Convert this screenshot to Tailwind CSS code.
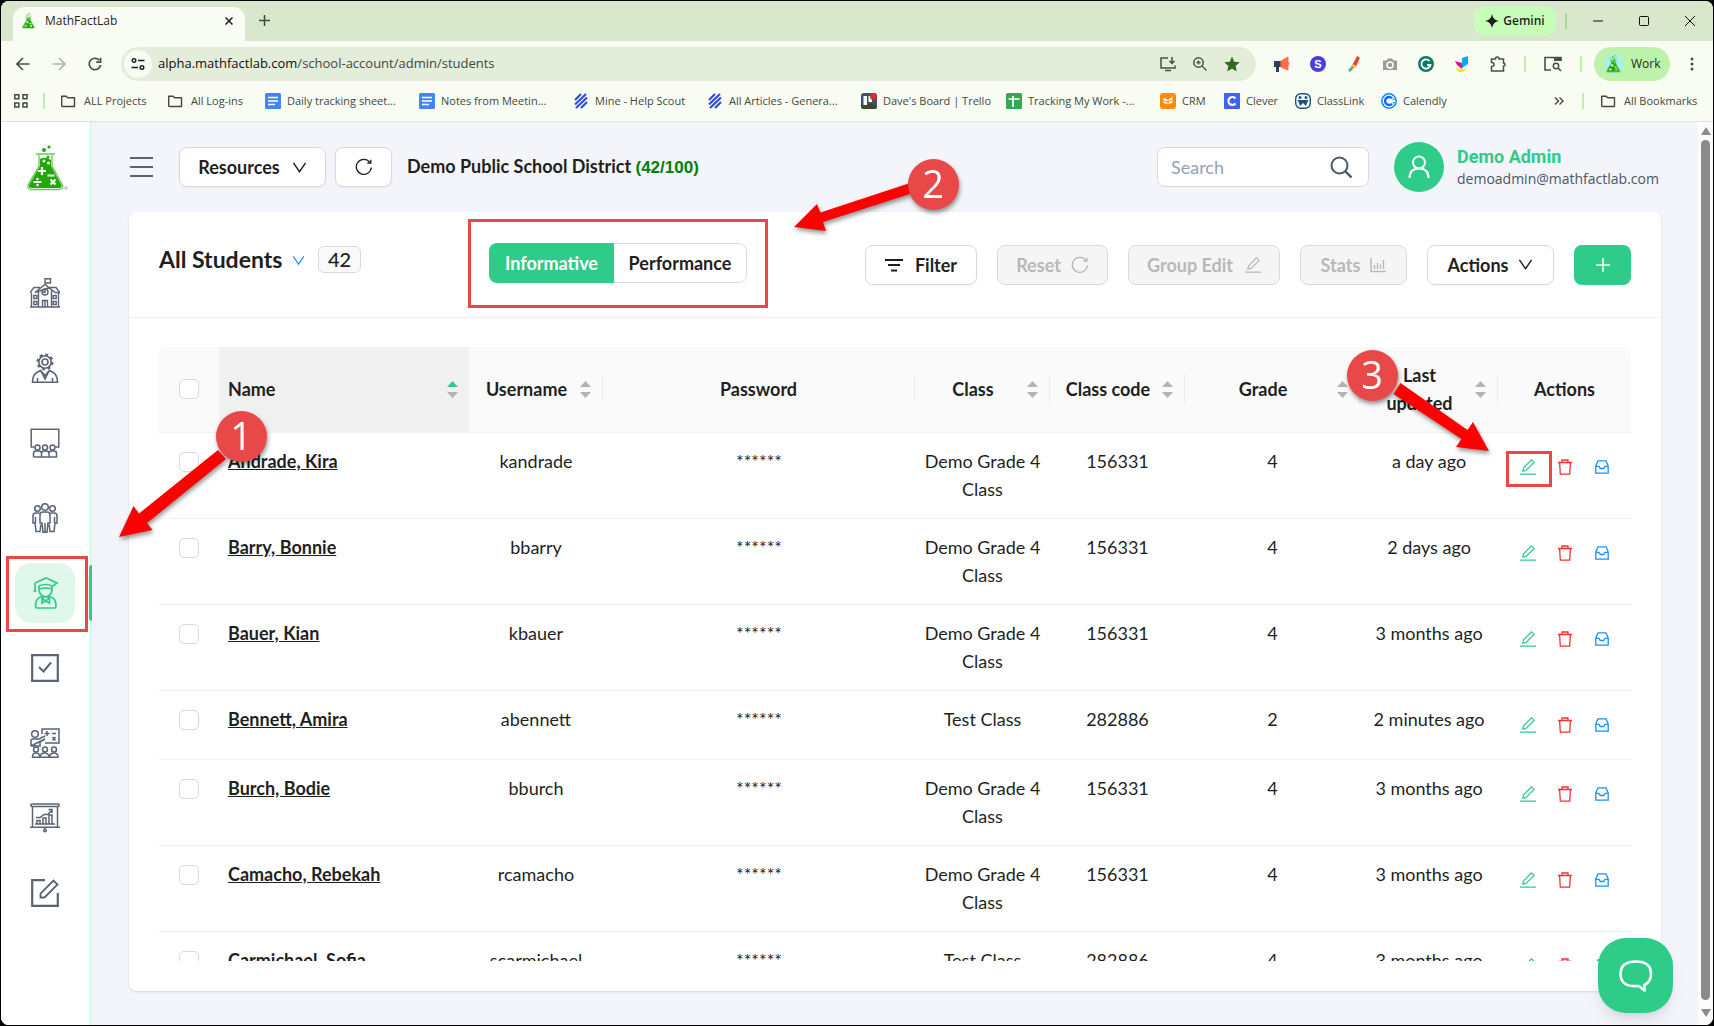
<!DOCTYPE html>
<html lang="en">

<head>
  <meta charset="UTF-8" />
  <title>MathFactLab</title>
  <script src="https://cdn.jsdelivr.net/npm/@tailwindcss/browser@4"></script>
</head>

<body class="h-screen overflow-hidden bg-black p-px font-['Lato',sans-serif] text-[#1f1f1f]">

  <!-- shared icons -->
  <svg class="hidden">
    <symbol id="flask" viewBox="0 0 42 46">
      <circle cx="18" cy="5" r="2" fill="#23a80b" />
      <circle cx="23" cy="2" r="1.600" fill="#23a80b" />
      <path d="M10 9h19M13 10v11L2 40q-1 4 3 4.500h28q5-.5 3.500-4.500L26 21V10" fill="none" stroke="#6cc65c" stroke-width="1.300" />
      <path d="M14 14q5-3 11 1v6l10.500 19q1 3-2.500 3H5.500Q2 43 3 40l11-19z" fill="#23a80b" />
      <circle cx="18" cy="16" r="1.500" fill="#fff" /><circle cx="22" cy="12" r="1.500" fill="#23a80b" />
      <circle cx="22.500" cy="18" r="1.500" fill="#fff" />
      <path d="M16 22v8M12 26h8M21.500 30.500h7M7.500 37h8M24.500 34.500l5 5M29.500 34.500l-5 5" stroke="#fff" stroke-width="2.200" />
      <circle cx="11.500" cy="34" r="1.200" fill="#fff" /><circle cx="11.500" cy="40" r="1.200" fill="#fff" />
      <circle cx="40" cy="43" r="1.300" fill="none" stroke="#6cc65c" stroke-width=".7" />
    </symbol>
    <symbol id="chevron" viewBox="0 0 16 16">
      <path d="M1.500 3L8 12.500 14.500 3" fill="none" stroke="currentColor" stroke-width="1.500" />
    </symbol>
    <symbol id="reload" viewBox="0 0 18 18">
      <path d="M16.300 9.500A7.500 7.500 0 1 1 15 4.600M15.800 1.800v3.400h-3.600" fill="none" stroke="currentColor" stroke-width="1.300" />
    </symbol>
    <symbol id="pencil" viewBox="0 0 16 16">
      <path d="M2.800 12.200l.8-3.400 7.900-8 2.600 2.600-8 8zM0 15.200h16" fill="none" stroke="currentColor" stroke-width="1.200" />
    </symbol>
    <symbol id="trash" viewBox="0 0 16 16">
      <path d="M1 3.500h14M5 3.500V1h6v2.500M2.600 3.500l.7 11.700h9.400l.7-11.700" fill="none" stroke="currentColor" stroke-width="1.300" />
    </symbol>
    <symbol id="inbox" viewBox="-1 -1 16 16">
      <path d="M.8 13.200V6L3 .8h8L13.200 6v7.200zM.8 6.300H4l1.300 2.200h3.400L10 6.300h3.200" fill="none" stroke="currentColor" stroke-width="1.300" />
    </symbol>
    <symbol id="folder" viewBox="0 0 16 16">
      <path d="M1.700 12.500V3.200h4.500l1.500 1.600h6.800v8.700H2.400q-.7 0-.7-1z" fill="none" stroke="currentColor" stroke-width="1.400" stroke-linejoin="round" />
    </symbol>
    <symbol id="doc" viewBox="0 0 16 16">
      <rect width="16" height="16" rx="1.500" fill="#4285f4" />
      <path d="M3 4.500h10M3 8h10M3 11.500h7" stroke="#fff" stroke-width="1.400" />
    </symbol>
    <symbol id="helpscout" viewBox="0 0 14 16">
      <path d="M1 7l6-6M1 11.500L12 1M2 15L13 4.500M7 15l6-6" stroke="#304ddb" stroke-width="2.200" />
    </symbol>
  </svg>

  <div class="flex h-full flex-col overflow-hidden rounded-lg bg-[#f9fcf2]">

    <!-- tab strip -->
    <div class="flex h-10 shrink-0 items-start bg-[#d9e8cd] pl-3 pt-[6px] font-['Open_Sans',sans-serif] text-xs">
      <div class="flex h-[34px] w-[232px] items-center rounded-t-xl bg-[#f9fcf2] pb-[6px] pl-2 pr-2">
        <svg class="mr-2 size-4"><use href="#flask" /></svg>
        <span class="grow">MathFactLab</span>
        <button class="p-1" aria-label="Close tab"><svg class="size-2" viewBox="0 0 8 8"><path d="M.5.5l7 7M7.500.5l-7 7" stroke="#1f1f1f" stroke-width="1.500" /></svg></button>
      </div>
      <button class="ml-[14px] mt-2" aria-label="New tab"><svg class="size-[11px]" viewBox="0 0 11 11"><path d="M5.500 0v11M0 5.500h11" stroke="#3c4a3a" stroke-width="1.500" /></svg></button>
      <div class="grow"></div>
      <button class="flex h-7 w-[82px] items-center justify-center gap-1 rounded-[10px] bg-[#c8ffb8] font-semibold">
        <svg class="size-[14px]" viewBox="0 0 14 14"><path d="M7 0q1 6 7 7-6 1-7 7-1-6-7-7 6-1 7-7z" fill="#1f1f1f" /></svg>Gemini
      </button>
      <div class="ml-[9px] mt-[6px] h-4 w-[2px] bg-[#a9d69a]"></div>
      <div class="flex items-center pl-2">
        <button class="grid h-7 w-[46px] place-items-center" aria-label="Minimize"><svg class="size-[10px]" viewBox="0 0 10 10"><path d="M0 5h10" stroke="#111" /></svg></button>
        <button class="grid h-7 w-[46px] place-items-center" aria-label="Maximize"><svg class="size-[10px]" viewBox="0 0 10 10"><rect x=".5" y=".5" width="9" height="9" rx="1" fill="none" stroke="#111" /></svg></button>
        <button class="grid h-7 w-[46px] place-items-center" aria-label="Close"><svg class="size-[10px]" viewBox="0 0 10 10"><path d="M0 0l10 10M10 0L0 10" stroke="#111" /></svg></button>
      </div>
    </div>

    <!-- toolbar -->
    <div class="flex h-[46px] shrink-0 items-center pl-[15px] pr-[19px] text-[#43533f]">
      <button class="mr-[22px]" aria-label="Back"><svg class="size-[14px]" viewBox="0 0 14 14"><path d="M13.500 7H1.500M7 1L1 7l6 6" fill="none" stroke="currentColor" stroke-width="1.600" /></svg></button>
      <button class="mr-[22px] text-[#adb5a9]" aria-label="Forward"><svg class="size-[14px]" viewBox="0 0 14 14"><path d="M.5 7h12M7 1l6 6-6 6" fill="none" stroke="currentColor" stroke-width="1.600" /></svg></button>
      <button class="mr-[19px]" aria-label="Reload"><svg class="size-[14px]" viewBox="0 0 14 14"><path d="M12.600 8A5.700 5.700 0 1 1 11.300 3.200M12.600.8v4.400H8.200" fill="none" stroke="currentColor" stroke-width="1.700" /></svg></button>
      <div class="flex h-[34px] grow items-center rounded-full bg-[#e4ecda] pl-[3px] pr-4">
        <span class="grid size-7 place-items-center rounded-full bg-[#f9fcf2]"><svg class="size-[14px]" viewBox="0 0 14 14"><path d="M7 3.500h6.500M.5 10.500H7" stroke="#1f1f1f" stroke-width="1.500" /><circle cx="3" cy="3.500" r="1.800" fill="none" stroke="#1f1f1f" stroke-width="1.400" /><circle cx="11" cy="10.500" r="1.800" fill="none" stroke="#1f1f1f" stroke-width="1.400" /></svg></span>
        <span class="grow pl-[6px] font-['Open_Sans',sans-serif] text-[13px] text-[#43483f]"><span class="text-[#111]">alpha.mathfactlab.com</span>/school-account/admin/students</span>
        <span class="flex items-center gap-4">
          <svg class="size-4" viewBox="0 0 16 16"><path d="M8 2H1v10h14V9.500M5 14.500h6M12 1v6.500M9.500 5L12 7.500 14.500 5" fill="none" stroke="currentColor" stroke-width="1.500" /></svg>
          <svg class="size-4" viewBox="0 0 16 16"><circle cx="6.500" cy="6.500" r="4.700" fill="none" stroke="currentColor" stroke-width="1.500" /><path d="M10 10l4.500 4.500M4.500 6.500h4M6.500 4.500v4" stroke="currentColor" stroke-width="1.400" /></svg>
          <svg class="size-4" viewBox="0 0 16 16"><path d="M8 .5l2.200 5.200 5.600.5-4.200 3.700 1.200 5.500L8 12.500l-4.800 2.900 1.200-5.500L.2 6.200l5.600-.5z" fill="#33691e" /></svg>
        </span>
      </div>
      <div class="ml-[18px] flex items-center gap-5">
        <svg class="size-4" viewBox="0 0 16 16"><path d="M0 5h9v6H5v5H2v-5H0z" fill="#2b3f5c" /><path d="M7 5l7-4v13l-7-3zM15 6v3" fill="#ff6f47" stroke="#ff6f47" /></svg>
        <svg class="size-4" viewBox="0 0 16 16"><circle cx="8" cy="8" r="8" fill="#4a3ee0" /><text x="8" y="12" text-anchor="middle" font-family="Liberation Sans" font-weight="bold" font-size="11" fill="#fff">S</text></svg>
        <svg class="size-4" viewBox="0 0 16 16"><path d="M7 9l4.500-8L13 2 9.500 10z" fill="#e8432e" stroke="#e8432e" stroke-width="1.500" /><path d="M6 9l3 2" stroke="#f5c043" stroke-width="3" /><path d="M3 15l4-4" stroke="#53a891" stroke-width="2.500" /></svg>
        <svg class="size-4" viewBox="0 0 16 16"><path d="M1 4.500h3.500L6 2.500h4l1.500 2H15V14H1z" fill="#9b9b9b" /><circle cx="8" cy="9" r="3" fill="none" stroke="#fff" stroke-width="1.500" /></svg>
        <svg class="size-4" viewBox="0 0 16 16"><circle cx="8" cy="8" r="8" fill="#0b7a66" /><path d="M11.500 5A4.600 4.600 0 1 0 12.500 9H9" fill="none" stroke="#fff" stroke-width="1.800" /></svg>
        <svg class="size-4" viewBox="0 0 16 16"><path d="M8 2l6-2v8l-6 4z" fill="#00aeef" /><path d="M1 5l7 2v6l-5-4z" fill="#ec0a8c" /><path d="M1 11l6 3 6-2-4 4H5z" fill="#ffe600" /></svg>
        <svg class="size-4" viewBox="0 0 16 16"><path d="M1.500 3h4q0-2 1.800-2T9 3h4.500v4q1.500 0 1.500 1.500T13.500 10v5h-12v-4.500q2.500 0 2.500-2t-2.500-2z" fill="none" stroke="currentColor" stroke-width="1.500" /></svg>
      </div>
      <div class="ml-[18px] h-4 w-[2px] bg-[#bdf0ab]"></div>
      <svg class="ml-[18px] h-4 w-[18px]" viewBox="0 0 18 16"><path d="M7 14H1V1.500h16V5" fill="none" stroke="currentColor" stroke-width="1.600" /><path d="M10 1h7v4h-7z" fill="currentColor" /><circle cx="12" cy="10" r="2.700" fill="none" stroke="currentColor" stroke-width="1.500" /><path d="M14 12l3 3" stroke="currentColor" stroke-width="1.600" /></svg>
      <div class="ml-[18px] h-4 w-[2px] bg-[#bdf0ab]"></div>
      <button class="ml-3 flex h-[34px] w-[76px] items-center gap-[7px] rounded-full bg-[#bdf2ab] pl-[10px] font-['Open_Sans',sans-serif] text-xs text-[#14330c]">
        <span class="grid size-5 place-items-center rounded-full bg-[#a8f0e8]"><svg class="size-[18px]"><use href="#flask" /></svg></span>Work
      </button>
      <button class="ml-5" aria-label="Menu"><svg class="h-[14px] w-1" viewBox="0 0 4 14"><circle cx="2" cy="2" r="1.500" fill="currentColor" /><circle cx="2" cy="7" r="1.500" fill="currentColor" /><circle cx="2" cy="12" r="1.500" fill="currentColor" /></svg></button>
    </div>

    <!-- bookmarks -->
    <nav class="flex h-[35px] shrink-0 items-center border-b border-[#dfe5d6] pl-[13px] pr-[12px] pb-[6px] font-['Open_Sans',sans-serif] text-[11px] whitespace-nowrap text-[#43483f]">
      <svg class="size-[14px]" viewBox="0 0 14 14"><path d="M.8.8h4v4h-4zM9 .8h4v4H9zM.8 9h4v4h-4zM9 9h4v4H9z" fill="none" stroke="currentColor" stroke-width="1.500" /></svg>
      <div class="ml-[15px] h-4 w-[2px] bg-[#bdf0ab]"></div>
      <a href="#" class="ml-[15px] flex w-[107px] items-center gap-2"><svg class="size-4"><use href="#folder" /></svg>ALL Projects</a>
      <a href="#" class="flex w-[98px] items-center gap-2"><svg class="size-4"><use href="#folder" /></svg>All Log-ins</a>
      <a href="#" class="flex w-[154px] items-center gap-[6px]"><svg class="size-4"><use href="#doc" /></svg>Daily tracking sheet...</a>
      <a href="#" class="flex w-[155px] items-center gap-[6px]"><svg class="size-4"><use href="#doc" /></svg>Notes from Meetin...</a>
      <a href="#" class="flex w-[134px] items-center gap-[7px]"><svg class="h-4 w-[14px]"><use href="#helpscout" /></svg>Mine - Help Scout</a>
      <a href="#" class="flex w-[153px] items-center gap-[7px]"><svg class="h-4 w-[14px]"><use href="#helpscout" /></svg>All Articles - Genera...</a>
      <a href="#" class="flex w-[145px] items-center gap-[6px]"><svg class="size-4" viewBox="0 0 16 16"><rect width="16" height="16" rx="3" fill="#3b5468" /><path d="M0 12q8-3 16 1v1q0 2-2 2H3q-3 0-3-3z" fill="#3d4a30" /><rect x="2.500" y="3" width="3.500" height="9" fill="#fff" /><rect x="7.500" y="3" width="3.500" height="6" fill="#fff" /><circle cx="12.500" cy="3.500" r="3.500" fill="#d3302b" /></svg>Dave's Board | Trello</a>
      <a href="#" class="flex w-[154px] items-center gap-[6px]"><svg class="size-4" viewBox="0 0 16 16"><rect width="16" height="16" rx="1.500" fill="#34a853" /><path d="M7 3v11M2.500 6h11" stroke="#fff" stroke-width="1.700" /></svg>Tracking My Work -...</a>
      <a href="#" class="flex w-16 items-center gap-[6px]"><svg class="size-4" viewBox="0 0 16 16"><rect width="16" height="16" rx="3" fill="#fb8c00" /><path d="M3.500 5l4 1.300v5l-4-1.500zM12.500 4l-4 2.300v5l4-1.500z" fill="#fff" /><path d="M3.500 8l4 1 5-2" stroke="#fb8c00" fill="none" /></svg>CRM</a>
      <a href="#" class="flex w-[71px] items-center gap-[6px]"><svg class="size-4" viewBox="0 0 16 16"><rect width="16" height="16" rx="1" fill="#4160f5" /><path d="M11.500 5.500A4 4 0 1 0 11.500 10.500" fill="none" stroke="#fff" stroke-width="2.200" /></svg>Clever</a>
      <a href="#" class="flex w-[86px] items-center gap-[6px]"><svg class="size-4" viewBox="0 0 16 16"><rect x=".7" y=".7" width="14.600" height="14.600" rx="5" fill="#fff" stroke="#1c5279" stroke-width="1.400" /><circle cx="5" cy="4.500" r="1.500" fill="#1c5279" /><circle cx="11" cy="4.500" r="1.500" fill="#1c5279" /><path d="M2.500 7h11L12 10l-1 3-3-3-3 3-1-3z" fill="#1c5279" /></svg>ClassLink</a>
      <a href="#" class="flex items-center gap-[6px]"><svg class="size-4" viewBox="0 0 16 16"><circle cx="8" cy="8" r="7.200" fill="none" stroke="#0a84ff" stroke-width="1.500" /><path d="M11 5.300A4 4 0 1 0 11 10.700" fill="none" stroke="#006bff" stroke-width="2.400" /><path d="M11.500 6.300h3.500M11.500 9.700h3.500" stroke="#25b7f0" stroke-width="1.400" /></svg>Calendly</a>
      <div class="grow"></div>
      <svg class="h-2 w-[10px]" viewBox="0 0 10 8"><path d="M1 .5L4.500 4 1 7.500M5.500.5L9 4 5.500 7.500" fill="none" stroke="currentColor" stroke-width="1.400" /></svg>
      <div class="ml-[18px] h-4 w-[2px] bg-[#bdf0ab]"></div>
      <a href="#" class="ml-4 flex w-[101px] items-center gap-2"><svg class="size-4"><use href="#folder" /></svg>All Bookmarks</a>
    </nav>

    <div class="flex min-h-0 grow bg-[#f4f5fa]">

      <!-- sidebar -->
      <aside class="flex w-[90px] shrink-0 flex-col items-center border-r border-[#cdf3e2] bg-white pt-[23px] pr-[2px] text-[#5a6474]">
        <svg class="ml-[5px] h-[46px] w-[42px]"><use href="#flask" /></svg>
        <nav class="mt-[72px] flex flex-col gap-[15px]">
          <a href="#" class="grid size-[60px] place-items-center" aria-label="School">
            <svg class="size-[30px]" viewBox="0 0 30 30" fill="none" stroke="currentColor" stroke-width="1.400"><path d="M0 29h30M1.500 29V14.500M28.500 29V14.500M0 14.500L4 9.500h6M20 9.500h6l4 5h-5L15 6.500 5 14.500zM15 7V.8h5.500V5H15M8.500 12.500V29M21.500 12.500V29M12.500 29v-6.500h5V29M15 22.500V29M3.800 17.500h3v3h-3zM3.800 23.500h3v3h-3zM23.200 17.500h3v3h-3zM23.200 23.500h3v3h-3z" /><circle cx="15" cy="14" r="3" /><path d="M15 12v2.200h-2" /></svg>
          </a>
          <a href="#" class="grid size-[60px] place-items-center" aria-label="Administrators">
            <svg class="size-[30px]" viewBox="0 0 30 30" fill="none" stroke="currentColor" stroke-width="1.600"><path d="M2.500 29.200q0-7.700 5-10.200l3-1.500 4.500 5 4.500-5 3 1.500q5 2.500 5 10.200zM7.500 29v-4M22.500 29v-4M11 18l4 8 4-8" /><circle cx="15" cy="9" r="6.200" /><circle cx="15" cy="9" r="3" /><circle cx="15" cy="9" r="7.500" stroke-width="2" stroke-dasharray="2.900 3" /></svg>
          </a>
          <a href="#" class="grid size-[60px] place-items-center" aria-label="Classes">
            <svg class="size-[30px]" viewBox="0 0 30 30" fill="none" stroke="currentColor" stroke-width="1.500"><path d="M4.500 19H1.200V1.200h27.600V19h-3.300" /><circle cx="7.500" cy="19.500" r="2.500" /><circle cx="15" cy="19.500" r="2.500" /><circle cx="22.500" cy="19.500" r="2.500" /><path d="M3.500 29v-3.500q0-2.500 2.500-2.500h3q2.500 0 2.500 2.500V29M11.500 29v-3.500q0-2.500 2.500-2.500h2.500q2.500 0 2.500 2.500V29M19 25.500q0-2.500 2.500-2.500h2.500q2.500 0 2.500 2.500V29h-23" /></svg>
          </a>
          <a href="#" class="grid size-[60px] place-items-center" aria-label="Groups">
            <svg class="size-[30px]" viewBox="0 0 30 30" fill="none" stroke="currentColor" stroke-width="1.500"><circle cx="15" cy="4" r="3.300" /><circle cx="7.500" cy="5.500" r="2.800" /><circle cx="22.500" cy="5.500" r="2.800" /><path d="M10 20V12q0-3 3-3h4q3 0 3 3v8h-2l-1 9.300h-4L12 20zM15 20v9M9.500 10H6q-3 0-3 3v7h2l1 8.500h4l.8-7M20.500 10H24q3 0 3 3v7h-2l-1 8.500h-4l-.8-7M5.500 14v6M24.500 14v6" /></svg>
          </a>
          <a href="#" class="grid size-[60px] place-items-center rounded-2xl bg-[#e0f7ec] text-[#2ecb89]" aria-label="Students">
            <svg class="h-8 w-[30px]" viewBox="0 0 30 32" fill="none" stroke="currentColor" stroke-width="1.700"><path d="M5 6l11-5 11 5-5 3.500M5 6v8M3.500 14h3M9 9q7-3 13 0v3q0 5-4 7-2.500 1.500-5 0-4-2-4-7zM9 12q7-2 13 0M7 31q-1.500 0-1.500-1.500 0-8 5-9.500h10.500q5 1.500 5 9.500 0 1.500-1.500 1.500zM12 21l3.500 3 4-3v5l-4-2-3.500 2z" /></svg>
          </a>
          <a href="#" class="grid size-[60px] place-items-center" aria-label="Assignments">
            <svg class="size-7" viewBox="0 0 28 28" fill="none" stroke="currentColor" stroke-width="2.200"><path d="M1.200 1.200h25.600v25.600H1.200z" /><path d="M8 13l4.500 4.500L20 8.500" stroke-width="2" /></svg>
          </a>
          <a href="#" class="grid size-[60px] place-items-center" aria-label="Teaching">
            <svg class="size-[30px]" viewBox="0 0 30 30" fill="none" stroke="currentColor" stroke-width="1.500"><circle cx="5" cy="6" r="3.300" /><path d="M1 18v-5q0-2 2-2h6l6-3M15 11l-5 3v4H1zM12 6V1h17v14H15M17 3v5M14.500 5.500h5M22 5.500h4M22.500 9l3 3.500M25.500 9l-3 3.500" /><circle cx="6" cy="21.500" r="2.500" /><circle cx="15" cy="21.500" r="2.500" /><circle cx="24" cy="21.500" r="2.500" /><path d="M2.500 29.200q0-4.200 3.500-4.200t4 4.200q.5-4.200 4.500-4.200t5 4.200q.5-4.200 4.500-4.200t4 4.200z" /></svg>
          </a>
          <a href="#" class="grid size-[60px] place-items-center" aria-label="Reports">
            <svg class="size-[30px]" viewBox="0 0 30 30" fill="none" stroke="currentColor" stroke-width="1.500"><rect x=".8" y="1" width="28.400" height="2.400" rx="1.200" /><path d="M2.500 3.500V24M27.500 3.500V24M0 24.200h30M15 24v3M5 21h20M7 21v-3.500h3V21M13 21v-6h3v6M19 21v-9h3v9M6 14.500h4l4-3h4L22 7M18.500 6.500H22V10" /><circle cx="15" cy="27.500" r="1.300" /></svg>
          </a>
          <a href="#" class="grid size-[60px] place-items-center" aria-label="Edit">
            <svg class="size-7" viewBox="0 0 28 28" fill="none" stroke="currentColor" stroke-width="2.200"><path d="M14 1.200H1.200v25.600h25.600V14" /><path d="M9.500 18.500v-4L22.500 1.500l4 4-13 13z" stroke-width="1.800" /></svg>
          </a>
        </nav>
      </aside>

      <main class="flex min-w-0 grow flex-col pb-[34px] pl-[38px] pr-[37px]">

        <!-- page header -->
        <header class="flex h-[90px] shrink-0 items-center pl-px text-lg font-bold">
          <button class="mr-[26px]" aria-label="Toggle menu"><svg class="h-[22px] w-[23px]" viewBox="0 0 23 22"><path d="M0 2h23M0 11h23M0 20h23" stroke="#5a6474" stroke-width="2" /></svg></button>
          <button class="mr-[9px] flex h-10 w-[147px] items-center justify-center gap-3 rounded-lg border border-[#d9d9d9] bg-white shadow-xs">Resources <svg class="size-[15px]"><use href="#chevron" /></svg></button>
          <button class="mr-[15px] grid h-10 w-[57px] place-items-center rounded-lg border border-[#d9d9d9] bg-white shadow-xs" aria-label="Refresh"><svg class="size-[18px]"><use href="#reload" /></svg></button>
          <p class="grow">Demo Public School District <span class="font-['Liberation_Sans',sans-serif] text-[17px] text-[#008000]">(42/100)</span></p>
          <label class="flex h-10 w-[212px] items-center rounded-lg border border-[#d9d9d9] bg-white pl-[13px] pr-4">
            <input type="text" placeholder="Search" aria-label="Search" class="w-0 grow font-normal outline-none placeholder:text-[#94a1b8]" />
            <svg class="size-[22px]" viewBox="0 0 22 22"><circle cx="9.500" cy="9.500" r="8" fill="none" stroke="#4b5563" stroke-width="2" /><path d="M15 15l6.500 6.500" stroke="#4b5563" stroke-width="2.400" /></svg>
          </label>
          <div class="ml-[25px] flex items-center">
            <span class="mr-[13px] grid size-[50px] place-items-center rounded-full bg-[#2ecb89]"><svg class="h-6 w-[22px]" viewBox="0 0 22 24"><circle cx="11" cy="7.500" r="6" fill="none" stroke="#fff" stroke-width="2" /><path d="M1.500 23q0-9.500 9.500-9.500t9.500 9.500" fill="none" stroke="#fff" stroke-width="2" /></svg></span>
            <div class="w-[204px] leading-6"><p class="font-['Roboto',sans-serif] text-[#2ecb89]">Demo Admin</p><p class="font-['Open_Sans',sans-serif] text-[14px] leading-5 font-normal text-[#4b5563]">demoadmin@mathfactlab.com</p></div>
          </div>
        </header>

        <!-- students card -->
        <section class="flex min-h-0 grow flex-col rounded-lg bg-white shadow-sm">
          <div class="flex h-[106px] shrink-0 items-center border-b border-[#f0f0f0] px-[30px] text-lg font-bold">
            <h1 class="mb-3 w-[133px] text-[23px] leading-8 whitespace-nowrap">All Students</h1>
            <svg class="mb-2 size-[13px] text-[#1890ff]"><use href="#chevron" /></svg>
            <span class="mb-[11px] ml-[13px] grid h-[27px] w-[43px] place-items-center rounded-md border border-[#d9d9d9] bg-[#fafafa] text-xl leading-6 font-medium">42</span>
            <div class="ml-[128px] mb-1 flex h-10 w-[258px] shrink-0 overflow-hidden rounded-lg">
              <button class="w-[125px] bg-[#2ecb89] text-white">Informative</button>
              <button class="grow rounded-r-lg border border-l-0 border-[#d9d9d9] bg-white">Performance</button>
            </div>
            <div class="flex grow justify-end gap-5">
              <button class="flex h-10 w-[112px] items-center justify-center gap-3 rounded-lg border border-[#d9d9d9] shadow-xs"><svg class="h-[14px] w-[18px]" viewBox="0 0 18 14"><path d="M0 2h18M3 7h12M6 12.500h6" stroke="#1f1f1f" stroke-width="1.800" /></svg>Filter</button>
              <button disabled class="flex h-10 w-[111px] items-center justify-center gap-[10px] rounded-lg border border-[#d9d9d9] bg-[#f5f5f5] text-[#b8b8b8]">Reset<svg class="size-[18px]"><use href="#reload" /></svg></button>
              <button disabled class="flex h-10 w-[152px] items-center justify-center gap-3 rounded-lg border border-[#d9d9d9] bg-[#f5f5f5] text-[#b8b8b8]">Group Edit<svg class="size-4"><use href="#pencil" /></svg></button>
              <button disabled class="flex h-10 w-[107px] items-center justify-center gap-[10px] rounded-lg border border-[#d9d9d9] bg-[#f5f5f5] text-[#b8b8b8]">Stats<svg class="size-4" viewBox="0 0 16 16"><path d="M1 1v13.500h15M4.500 12V8M7.500 12V6M10.500 12V7.500M13.500 12V3" fill="none" stroke="currentColor" stroke-width="1.400" /></svg></button>
              <button class="flex h-10 w-[127px] items-center justify-center gap-[10px] rounded-lg border border-[#d9d9d9] shadow-xs">Actions<svg class="size-[15px]"><use href="#chevron" /></svg></button>
              <button class="grid h-10 w-[57px] place-items-center rounded-lg bg-[#2ecb89]" aria-label="Add student"><svg class="size-[14px]" viewBox="0 0 14 14"><path d="M7 0v14M0 7h14" stroke="#fff" stroke-width="1.400" /></svg></button>
            </div>
          </div>

          <div class="mx-[30px] mt-[29px] mb-[30px] min-h-0 grow overflow-hidden">
            <table class="w-full table-fixed text-center text-lg leading-7">
              <colgroup>
                <col class="w-[60px]" /><col class="w-[250px]" /><col class="w-[134px]" /><col /><col class="w-[135px]" />
                <col class="w-[135px]" /><col class="w-[175px]" /><col class="w-[138px]" /><col class="w-[133px]" />
              </colgroup>
              <thead>
                <tr id="headRow" class="h-[85px] border-b border-[#f0f0f0]"></tr>
              </thead>
              <tbody id="studentRows"></tbody>
            </table>
          </div>
        </section>
      </main>

      <!-- page scrollbar -->
      <div class="flex w-[15px] shrink-0 flex-col items-center bg-[#fcfcfc] pt-[5px] pb-2">
        <svg class="h-2 w-[10px]" viewBox="0 0 10 8"><path d="M5 0l5 8H0z" fill="#8b8b8b" /></svg>
        <div class="mt-[5px] mb-[9px] w-[9px] grow rounded-full bg-[#8b8b8b]"></div>
        <svg class="h-2 w-[10px]" viewBox="0 0 10 8"><path d="M5 8l5-8H0z" fill="#8b8b8b" /></svg>
      </div>
    </div>
  </div>

  <!-- marker on the active menu item -->
  <div class="absolute top-[565px] left-[89px] h-[56px] w-[3px] rounded-l-lg bg-[#2ecb89]"></div>

  <!-- chat launcher -->
  <button class="absolute right-[41px] bottom-[13px] grid size-[75px] place-items-center rounded-[28px] bg-[#2ecb89] shadow-lg" aria-label="Chat">
    <svg class="h-8 w-[34px]" viewBox="0 0 34 32"><path d="M17 1.500q15 0 15 12.500 0 8-6.500 11v5.500L20 26q-18.500 1.500-18.500-12Q1.500 1.500 17 1.500z" fill="none" stroke="#fff" stroke-width="2.600" stroke-linejoin="round" /></svg>
  </button>

  <!-- numbered callouts -->
  <svg class="pointer-events-none absolute top-0 left-0 h-[1026px] w-[1714px] drop-shadow-[1px_3px_2px_rgba(0,0,0,0.4)]" viewBox="0 0 1714 1026">
    <g fill="#ff0000">
      <path d="M119 537l14.500-31 5.500 7.500L218 450l8 9-79 64 5.500 7z" />
      <path d="M794 227l23-23 3.500 8.500L910 183l3 10-90 29 3 9z" />
      <path d="M1489 451l-33-4 5.500-8-68-45 7-11 67 47 5.500-8z" />
    </g>
    <g fill="#e84848">
      <circle cx="241.500" cy="436.500" r="25.500" />
      <circle cx="933.500" cy="184.500" r="25.500" />
      <circle cx="1372.500" cy="375.500" r="25.500" />
    </g>
    <g fill="#fff" font-family="Open Sans" font-size="38" text-anchor="middle">
      <text x="241" y="450">1</text>
      <text x="933" y="198">2</text>
      <text x="1372" y="389">3</text>
    </g>
  </svg>
  <div class="absolute top-[556px] left-[6px] h-[76px] w-[82px] border-3 border-[#e84848]"></div>
  <div class="absolute top-[219px] left-[468px] h-[89px] w-[300px] border-3 border-[#e84848]"></div>
  <div class="absolute top-[451px] left-[1506px] h-[36px] w-[46px] border-3 border-[#e84848]"></div>

  <script>
    const columns = [
      { title: "Name", sort: "asc" },
      { title: "Username", sort: "none", divider: true },
      { title: "Password", divider: true },
      { title: "Class", sort: "none", divider: true },
      { title: "Class code", sort: "none", divider: true },
      { title: "Grade", sort: "none", divider: true },
      { title: "Last<br />updated", sort: "none", divider: true },
      { title: "Actions" },
    ];

    const students = [
      { name: "Andrade, Kira", user: "kandrade", cls: "Demo Grade 4 Class", code: "156331", grade: 4, updated: "a day ago" },
      { name: "Barry, Bonnie", user: "bbarry", cls: "Demo Grade 4 Class", code: "156331", grade: 4, updated: "2 days ago" },
      { name: "Bauer, Kian", user: "kbauer", cls: "Demo Grade 4 Class", code: "156331", grade: 4, updated: "3 months ago" },
      { name: "Bennett, Amira", user: "abennett", cls: "Test Class", code: "282886", grade: 2, updated: "2 minutes ago" },
      { name: "Burch, Bodie", user: "bburch", cls: "Demo Grade 4 Class", code: "156331", grade: 4, updated: "3 months ago" },
      { name: "Camacho, Rebekah", user: "rcamacho", cls: "Demo Grade 4 Class", code: "156331", grade: 4, updated: "3 months ago" },
      { name: "Carmichael, Sofia", user: "scarmichael", cls: "Test Class", code: "282886", grade: 4, updated: "3 months ago" },
    ];

    const checkbox = (label) => `<input type="checkbox" aria-label="${label}" class="block size-5 appearance-none rounded-[5px] border border-[#d9d9d9] bg-white" />`;

    // Sort arrows, the upper one is green when the column is sorted
    const sorter = (sort) => `
      <svg class="ml-[5px] h-[17px] w-[11px] shrink-0" viewBox="0 0 11 17">
        <path d="M5.500 0L11 6H0z" fill="${sort === "asc" ? "#2ecb89" : "#b3b3b3"}" />
        <path d="M5.500 17L11 11H0z" fill="#b3b3b3" />
      </svg>`;

    document.getElementById("headRow").innerHTML =
      `<th class="rounded-tl-lg bg-[#fafafa] pl-5">${checkbox("Select all students")}</th>` +
      columns.map(c => `
        <th class="p-0 font-bold last:rounded-tr-lg ${c.sort === "asc" ? "bg-[#f0f0f0] text-left" : "bg-[#fafafa]"}">
          <div class="flex h-7 items-center ${c.sort ? "pl-[9px] pr-[11px]" : ""} ${c.divider ? "border-r border-[#ebebeb]" : ""}">
            <span class="grow">${c.title}</span>${c.sort ? sorter(c.sort) : ""}
          </div>
        </th>`).join("");

    document.getElementById("studentRows").innerHTML = students.map(s => `
      <tr class="h-[69px] border-b border-[#f0f0f0] align-top">
        <td class="pt-[19px] pl-5">${checkbox("Select " + s.name)}</td>
        <td class="pt-[14px] pl-[9px] text-left"><a href="#" class="font-bold underline">${s.name}</a></td>
        <td class="pt-[14px]">${s.user}</td>
        <td class="pt-[14px]">******</td>
        <td class="px-2 pt-[14px] pb-[15px]">${s.cls}</td>
        <td class="pt-[14px]">${s.code}</td>
        <td class="pt-[14px]">${s.grade}</td>
        <td class="pt-[14px]">${s.updated}</td>
        <td class="pt-[26px]">
          <div class="flex items-center justify-center gap-[21px]">
            <button class="text-[#2ecb89]" aria-label="Edit"><svg class="size-4"><use href="#pencil" /></svg></button>
            <button class="text-[#f5302e]" aria-label="Delete"><svg class="size-4"><use href="#trash" /></svg></button>
            <button class="text-[#1890ff]" aria-label="Archive"><svg class="size-4"><use href="#inbox" /></svg></button>
          </div>
        </td>
      </tr>`).join("");
  </script>

</body>

</html>
